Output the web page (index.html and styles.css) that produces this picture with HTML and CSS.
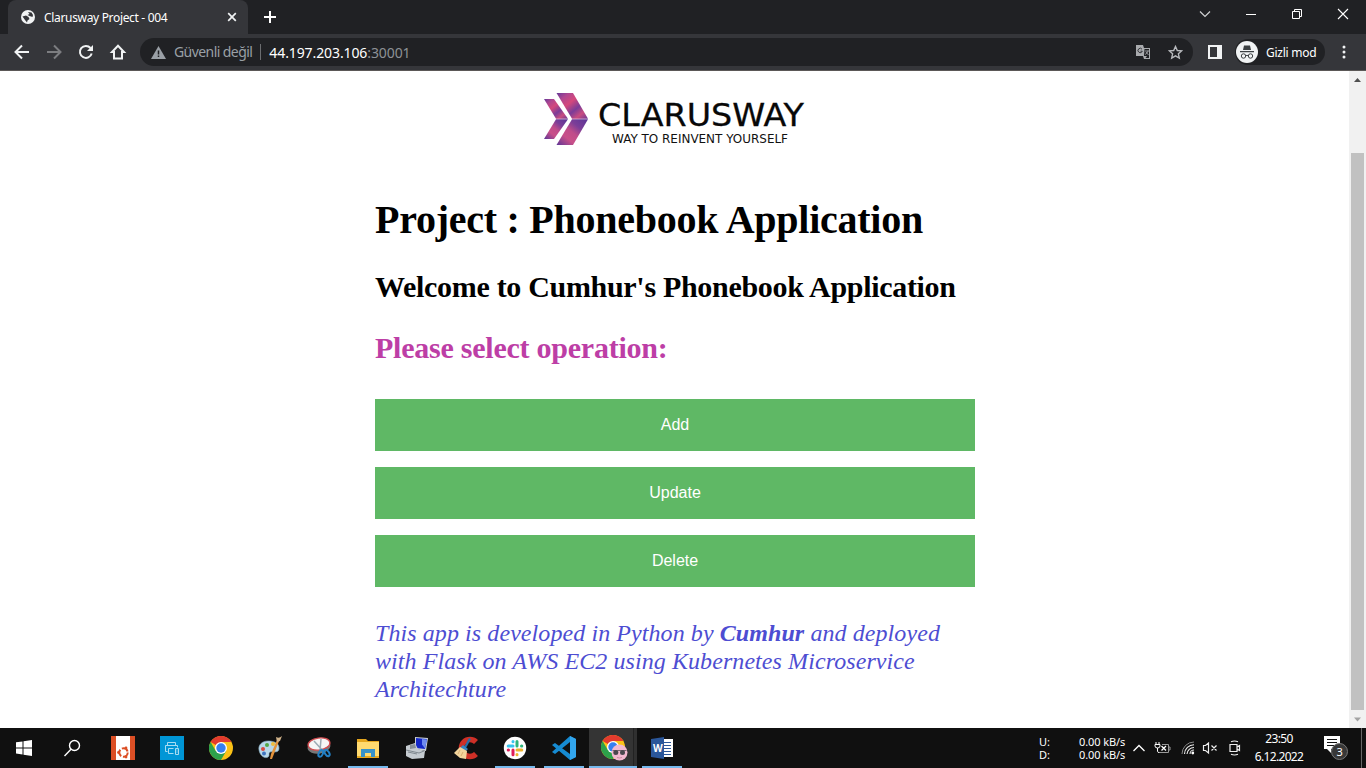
FILE: index.html
```html
<!DOCTYPE html>
<html lang="tr">
<head>
<meta charset="utf-8">
<title>Clarusway Project - 004</title>
<link rel="stylesheet" href="styles.css">
</head>
<body>
<header class="tabstrip">
  <div class="tab">
    <svg class="favicon" width="14" height="14" viewBox="0 0 14 14"><circle cx="7" cy="7" r="7" fill="#f1f3f4"/><path d="M1.500 6.500L5 5.500l2.500 1.500 1 2-2 1.500-.5 2L4 10z" fill="#35363a"/><path d="M7 2l1.500 2L6.500 5l2 1 3 1 .5-2-1.500-2.500z" fill="#35363a"/></svg>
    <span class="tab-title"><span class="fit">Clarusway Project - 004</span></span>
    <svg class="tab-close" width="10" height="10" viewBox="0 0 10 10"><path d="M1.200 1.200l7.600 7.600M8.800 1.200L1.200 8.800" stroke="#f1f3f4" stroke-width="1.700"/></svg>
  </div>
  <svg class="new-tab" width="12" height="12" viewBox="0 0 12 12"><path d="M6 0v12M0 6h12" stroke="#fff" stroke-width="2"/></svg>
  <div class="window-controls">
    <svg width="46" height="28" viewBox="0 0 46 28"><path d="M18 11.500l5 5 5-5" fill="none" stroke="#d0d1d3" stroke-width="1.200"/></svg>
    <svg width="46" height="28" viewBox="0 0 46 28"><path d="M18 14.500h10" stroke="#fff"/></svg>
    <svg width="46" height="28" viewBox="0 0 46 28"><path d="M18.500 11.500h7v7h-7zM20.500 11V9.500h7v7H26" fill="none" stroke="#fff"/></svg>
    <svg width="46" height="28" viewBox="0 0 46 28"><path d="M18 9l10 10M28 9L18 19" stroke="#fff" stroke-width="1.100"/></svg>
  </div>
</header>
<nav class="toolbar">
  <svg width="32" height="32" viewBox="0 0 32 32"><path d="M23 16H10M16 9.500L9.500 16l6.500 6.500" fill="none" stroke="#f1f3f4" stroke-width="2"/></svg>
  <svg width="32" height="32" viewBox="0 0 32 32"><path d="M9 16h13M16 9.500l6.500 6.500-6.500 6.500" fill="none" stroke="#7c7d80" stroke-width="2"/></svg>
  <svg width="32" height="32" viewBox="0 0 32 32"><path d="M20.500 12a6 6 0 1 0 1.200 5.500" fill="none" stroke="#f1f3f4" stroke-width="2"/><path d="M23 9v6h-6z" fill="#f1f3f4"/></svg>
  <svg width="32" height="32" viewBox="0 0 32 32"><path d="M16 9.800L22 16h-2v6.500h-8V16h-2z" fill="none" stroke="#f1f3f4" stroke-width="2"/></svg>
  <div class="omnibox">
    <svg class="warning" width="15" height="13" viewBox="0 0 15 13"><path d="M7.500 0L15 13H0z" fill="#9aa0a6"/><path d="M7.500 4.500v4M7.500 9.500v1.600" stroke="#202124" stroke-width="1.500"/></svg>
    <span class="insecure fit">Güvenli değil</span>
    <span class="address"><b class="host">44.197.203.106</b><span class="port">:30001</span></span>
    <svg class="translate" width="15" height="14" viewBox="0 0 15 14"><path d="M0 0h7l1 3h6v11H8l-1-3H0z" fill="#a9abae"/><path d="M8.500 4H13v9H9.500l1.500-2H8z" fill="#202124"/><path d="M6 4.200a2.200 2.200 0 1 0 .3 2H4.500" fill="none" stroke="#35363a"/><path d="M9 6h4M12 5.500c0 2-2 3.500-3 4M10 7l2.500 3" stroke="#a9abae" fill="none" stroke-width=".8"/></svg>
    <svg class="star" width="15" height="15" viewBox="0 0 15 15"><path d="M7.500 1.500l1.800 4 4.300.4-3.200 2.900.9 4.300-3.800-2.300-3.800 2.300.9-4.300-3.200-2.900 4.300-.4z" fill="none" stroke="#b8babd" stroke-width="1.400"/></svg>
  </div>
  <svg class="side-panel" width="14" height="14" viewBox="0 0 14 14"><path d="M0 0h14v14H0zM2 2v10h7V2z" fill="#f1f3f4" fill-rule="evenodd"/></svg>
  <div class="profile">
    <svg width="22" height="22" viewBox="0 0 22 22"><circle cx="11" cy="11" r="11" fill="#f1f3f4"/><path d="M8 4.500h6l1 4.500H7zM4 10h14v1.200H4z" fill="#3c4043"/><circle cx="7.500" cy="15" r="2.200" fill="none" stroke="#3c4043"/><circle cx="14.500" cy="15" r="2.200" fill="none" stroke="#3c4043"/><path d="M9.700 14.700q1.300-.8 2.600 0" fill="none" stroke="#3c4043"/></svg>
    <span class="fit">Gizli mod</span>
  </div>
  <svg class="menu-dots" width="4" height="14" viewBox="0 0 4 14"><g fill="#f1f3f4"><circle cx="2" cy="2" r="1.500"/><circle cx="2" cy="7" r="1.500"/><circle cx="2" cy="12" r="1.500"/></g></svg>
</nav>
<div class="viewport">
  <main class="page">
    <svg class="logo" width="270" height="54" viewBox="0 0 270 54">
      <defs>
        <linearGradient id="upper" x1="0" y1="0" x2="1" y2="1"><stop offset="0" stop-color="#643898"/><stop offset=".2" stop-color="#b04790"/><stop offset=".4" stop-color="#d4487c"/><stop offset=".62" stop-color="#7a3c98"/><stop offset=".8" stop-color="#c94c80"/><stop offset="1" stop-color="#6a3896"/></linearGradient>
        <linearGradient id="lower" x1="0" y1="1" x2="1" y2="0"><stop offset="0" stop-color="#5b3496"/><stop offset=".3" stop-color="#c95089"/><stop offset=".5" stop-color="#c04c8a"/><stop offset=".7" stop-color="#7b3e98"/><stop offset="1" stop-color="#5b3496"/></linearGradient>
      </defs>
      <path d="M0 6h10l14 19.700H12z" fill="url(#upper)"/><path d="M12 26.300h12L10 46H0z" fill="url(#lower)"/>
      <path d="M12.500 0H29l15 25.700H28z" fill="url(#upper)"/><path d="M28 26.300h16L29 52H12.500z" fill="url(#lower)"/>
      <text x="54" y="33" class="logo-name" textLength="206" lengthAdjust="spacingAndGlyphs">CLARUSWAY</text>
      <text x="68" y="50" class="logo-motto" textLength="176" lengthAdjust="spacingAndGlyphs">WAY TO REINVENT YOURSELF</text>
    </svg>
    <h1>Project : Phonebook Application</h1>
    <h2>Welcome to Cumhur's Phonebook Application</h2>
    <h2 class="prompt">Please select operation:</h2>
    <div class="actions"><a>Add</a><a>Update</a><a>Delete</a></div>
    <p class="credit">This app is developed in Python by <b>Cumhur</b> and deployed<br>with Flask on AWS EC2 using Kubernetes Microservice<br>Architechture</p>
  </main>
  <div class="scrollbar">
    <svg width="17" height="17" viewBox="0 0 17 17"><path d="M5 11l3.500-4 3.500 4z" fill="#505050"/></svg>
    <div class="thumb"></div>
    <svg width="17" height="17" viewBox="0 0 17 17"><path d="M5 6.500l3.500 4 3.500-4z" fill="#a3a3a3"/></svg>
  </div>
</div>
<footer class="taskbar">
  <div class="task sys"><svg width="16" height="16" viewBox="0 0 16 16"><path d="M0 2.300L6.500 1.400v6H0zM7.500 1.200L16 0v7.400H7.500zM0 8.400h6.500v6.100L0 13.600zM7.500 8.400H16V16l-8.500-1.200z" fill="#fff"/></svg></div>
  <div class="task sys search"><svg width="18" height="18" viewBox="0 0 18 18"><circle cx="11.500" cy="6.500" r="5" fill="none" stroke="#fff" stroke-width="1.400"/><path d="M8 10.200L1.500 17" stroke="#fff" stroke-width="1.400"/></svg></div>
  <div class="task"><svg width="24" height="24" viewBox="0 0 24 24"><path d="M0 0h24v24H0z" fill="#dc4f25"/><path d="M5 0h14v24H5z" fill="#fff"/><circle cx="12.500" cy="16.500" r="4.200" fill="none" stroke="#dc4f25" stroke-width="2" stroke-dasharray="7 1.800"/><g fill="#dc4f25"><circle cx="7.500" cy="16.500" r="1.400"/><circle cx="15" cy="12" r="1.400"/><circle cx="15" cy="21" r="1.400"/></g></svg></div>
  <div class="task"><svg width="24" height="24" viewBox="0 0 24 24"><path d="M0 0h24v24H0z" fill="#0096d6"/><g fill="none" stroke="#a8dcf2"><path d="M7.500 9.500v-3h8v3M7.500 15.500h-2v-6h12v2M8.500 12.500h5M8.500 12.500v5h5M15.500 12.500h3v6h-3zM16.500 14h1M16.500 16h1"/></g></svg></div>
  <div class="task"><svg width="24" height="24" viewBox="0 0 24 24"><use href="#chrome"/></svg></div>
  <div class="task"><svg width="24" height="24" viewBox="0 0 24 24"><path d="M10 5C4 5 0 9 1 14c1 6 6 9 9 7 2-1 0-4 2-5 3-1 9 2 9-4 0-5-5-7-11-7z" fill="#b9d8e9" stroke="#8ab0c5" stroke-width=".6"/><circle cx="5" cy="13" r="2" fill="#d9493f"/><circle cx="9" cy="9" r="2" fill="#54a846"/><circle cx="15" cy="8" r="2" fill="#efbd3d"/><circle cx="6" cy="17.500" r="2" fill="#3f74bf"/><path d="M21 5l-7 18h-2l1-5 6-14z" fill="#e3933c"/><path d="M18 1q3 2 6-1l-2 5-3 1z" fill="#d2b48b"/></svg></div>
  <div class="task"><svg width="24" height="24" viewBox="0 0 24 24"><ellipse cx="12" cy="11" rx="11.500" ry="6.500" fill="#777" transform="rotate(-8 12 11)"/><ellipse cx="12" cy="8" rx="11" ry="6" fill="#f6f5f5" stroke="#d24c50" stroke-width="1.300" transform="rotate(-8 12 8)"/><path d="M7 5l10 11M14 3l-1 12" stroke="#9caab3" stroke-width="1.500"/><g fill="none" stroke="#2380c5" stroke-width="2"><ellipse cx="14" cy="17.500" rx="2" ry="3.500" transform="rotate(25 14 17)"/><ellipse cx="20" cy="17" rx="2" ry="3.500" transform="rotate(-35 20 17)"/></g></svg></div>
  <div class="task open"><svg width="24" height="24" viewBox="0 0 24 24"><path d="M1 3h9l2 2h11v17H1z" fill="#e5a61e"/><path d="M1 6h22v14H1z" fill="#ffda70"/><path d="M5 21v-8h14v8h-4v-4H9v4z" fill="#3792c9"/></svg></div>
  <div class="task"><svg width="24" height="24" viewBox="0 0 24 24"><path d="M10 1l13 1-2 13-11-2z" fill="#cbd2d7"/><path d="M11 2l11 1-2 10-9-1z" fill="#1428c8"/><path d="M17 3l5 .5-2 9-3-4z" fill="#6f8bf0"/><path d="M1 10l9-3 3 6 7 2-1 7-12 1-6-3z" fill="#c5cbd0"/><path d="M1 14l13 3 5-2M3 16l9 2" stroke="#808990" fill="none"/><path d="M5 9l5-1 1 4-6 1z" fill="#858e95"/></svg></div>
  <div class="task"><svg width="24" height="24" viewBox="0 0 24 24"><path d="M22 6A8.500 8.500 0 1 0 22 18" fill="none" stroke="#cf3027" stroke-width="5.500"/><path d="M15 2l2 1-5 9-2-1z" fill="#2570aa"/><path d="M9 9l5 4-2 2-6-3z" fill="#3785c2"/><path d="M6 11l7 4-1 8-6-1-6-5z" fill="#f2d49c"/><path d="M6 14l-2 4M9 16l-2 4" stroke="#d8ae70"/></svg></div>
  <div class="task open"><svg width="24" height="24" viewBox="0 0 24 24"><circle cx="12" cy="12" r="11.200" fill="#fff"/><g fill="none" stroke-width="3" stroke-linecap="round"><path d="M10 5.500v.3M5.200 10h4.800" stroke="#36c5f0"/><path d="M14 5.500V10M18.500 10h.3" stroke="#2eb67d"/><path d="M14 14h4.800M14 18.500v.3" stroke="#ecb22e"/><path d="M10 14v4.800M5.200 14h.3" stroke="#e01e5a"/></g></svg></div>
  <div class="task open"><svg width="24" height="24" viewBox="0 0 24 24"><path d="M18 0l6 3v18l-6 3L0 9l3-2 15 11V6L3 18l-3-2z" fill="#168bd2"/><path d="M18 0l6 3v18l-6 3z" fill="#32a6ee"/></svg></div>
  <div class="task open active"><svg width="27" height="26" viewBox="0 0 27 26"><use href="#chrome"/><circle cx="18.500" cy="17.500" r="8" fill="#f2b8d0"/><path d="M11.500 15.500h14" stroke="#7b6773"/><circle cx="14.800" cy="17.500" r="2.500" fill="#49474e"/><circle cx="21.500" cy="17.500" r="2.500" fill="#49474e"/><path d="M16 22.500q3 1 5 0" fill="none" stroke="#c98ba0"/></svg></div>
  <div class="task open"><svg width="24" height="24" viewBox="0 0 24 24"><path d="M12 3h11v18H12z" fill="#fff"/><path d="M14 6.500h7M14 9.500h7M14 12.500h7M14 15.500h7M14 18.500h7" stroke="#2b579a"/><path d="M1 3l13-2v22L1 21z" fill="#2b579a"/><text x="3" y="16" class="word-letter">W</text></svg></div>
  <div class="tray">
    <div class="speed"><span>U:</span><span>0.00 kB/s</span><span>D:</span><span>0.00 kB/s</span></div>
    <svg class="chevron" width="14" height="10" viewBox="0 0 14 10"><path d="M1.500 8L7 2.500 12.500 8" fill="none" stroke="#fff" stroke-width="1.300"/></svg>
    <svg class="battery" width="17" height="16" viewBox="0 0 17 16"><path d="M8 4.500h6.500v8h-9M14.500 7h1.500v3h-1.500" fill="none" stroke="#999"/><path d="M1 4.500h5v1.500q0 2-2.500 2T1 6zM2 2v2.500M5 2v2.500M3.500 8v3.500q0 1 2 1" fill="none" stroke="#fff"/><path d="M7.500 6l4.500 4.500M12 6l-4.500 4.500" stroke="#fff" stroke-width="1.300"/></svg>
    <svg class="wifi" width="14" height="14" viewBox="0 0 14 14"><g fill="none"><path d="M1 13A12 12 0 0 1 13 1" stroke="#888"/><path d="M3.500 13A9.500 9.500 0 0 1 13 3.800M6 13a7 7 0 0 1 7-6.500M9 13a4 4 0 0 1 4-4" stroke="#eee" stroke-width="1.100"/></g><circle cx="11.800" cy="12" r="1.400" fill="#fff"/></svg>
    <svg class="sound" width="16" height="14" viewBox="0 0 16 14"><path d="M1.500 4.500h2L6.500 2v10L3.500 9.500h-2zM9.500 4.500l5 5M14.500 4.500l-5 5" fill="none" stroke="#eee" stroke-width="1.200"/></svg>
    <svg class="camera" width="12" height="16" viewBox="0 0 12 16"><path d="M1 4.500h7v7H1zM8 7l2.500-1.500v5L8 9M2 1.700q3.500-1.400 7 0M2 14.300q3.500 1.400 7 0" fill="none" stroke="#eee" stroke-width="1.200"/></svg>
    <div class="clock"><span class="fit">23:50</span><span class="fit">6.12.2022</span></div>
    <svg class="notice" width="28" height="26" viewBox="0 0 28 26"><path d="M1 1h16v13H8v4l-4-4H1z" fill="#fff"/><path d="M4 4.500h10M4 7.500h10M4 10.500h7" stroke="#111"/><circle cx="16.500" cy="16.500" r="8" fill="#383838" stroke="#777"/><text x="13.500" y="20.500" class="count">3</text></svg>
  </div>
  <svg class="defs" width="0" height="0"><defs><g id="chrome"><circle cx="12" cy="12" r="12" fill="#fbc116"/><path d="M12 12L1.600 6A12 12 0 0 1 22.400 6H12z" fill="#e33b2e"/><path d="M1.600 6A12 12 0 0 0 12 24l5.200-9L12 12 6.800 15z" fill="#2da14b"/><circle cx="12" cy="12" r="6" fill="#fff"/><circle cx="12" cy="12" r="4.700" fill="#367ff0"/></g></defs></svg>
</footer>
</body>
</html>
```
FILE: styles.css
```css
* { box-sizing: border-box; }
body { margin: 0; width: 1366px; height: 768px; overflow: hidden; display: flex; flex-direction: column; background: #fff; font-family: "Noto Sans", "Open Sans", sans-serif; }
svg { display: block; flex: none; }
.fit { white-space: nowrap; }
.tabstrip { height: 34px; flex: none; display: flex; background: #202124; }
.tab { width: 240px; height: 34px; margin-left: 8px; padding: 0 11px 0 13px; display: flex; align-items: center; background: #35363a; border-radius: 8px 8px 0 0; }
.tab-title { flex: 1; margin-left: 9px; font-size: 12px; letter-spacing: -.33px; color: #fff; }
.new-tab { margin: 11px 0 0 16px; }
.window-controls { display: flex; margin-left: auto; }
.toolbar { height: 37px; flex: none; display: flex; align-items: center; padding: 0 20px 0 6px; background: #35363a; border-bottom: 1px solid #5b5857; }
.omnibox { width: 1053px; height: 28px; margin-left: 6px; padding: 0 10px 0 11px; display: flex; align-items: center; border-radius: 14px; background: #202124; font-size: 14px; }
.insecure { margin-left: 8px; padding-right: 8px; border-right: 1px solid #6b6d70; color: #9aa0a6; line-height: 16px; letter-spacing: -.57px; }
.address { margin-left: 8px; color: #9aa0a6; letter-spacing: -.1px; }
.host { font-weight: 400; color: #fff; }
.port { color: #8d9196; }
.translate { margin-left: auto; }
.star { margin-left: 17px; }
.side-panel { margin-left: 15px; }
.profile { width: 90px; height: 26px; margin-left: 13px; padding-left: 1px; display: flex; align-items: center; gap: 8px; border-radius: 13px; background: #202124; color: #fff; font-size: 12px; letter-spacing: -.25px; }
.menu-dots { margin-left: auto; }
.viewport { height: 657px; flex: none; display: flex; justify-content: space-between; }
.page { width: 600px; margin-left: 375px; padding-top: 22px; font-family: "Liberation Serif", "Times New Roman", serif; }
.logo { margin-left: 169px; }
.logo-name { font: 32px "DejaVu Sans", sans-serif; fill: #080808; stroke: #080808; stroke-width: .3px; }
.logo-motto { font: 11.500px "DejaVu Sans", sans-serif; fill: #111; }
h1 { margin: 50px 0 0; font-size: 40px; line-height: 46px; white-space: nowrap; letter-spacing: -.26px; }
h2 { margin: 27px 0 0; font-size: 30px; line-height: 34px; white-space: nowrap; letter-spacing: -.31px; }
.prompt { margin-top: 27px; color: #bd3ea6; letter-spacing: -.24px; }
.actions { margin-top: 34px; display: flex; flex-direction: column; gap: 16px; }
.actions a { height: 52px; background: #5fb865; color: #fff; font: 16px/51px "Liberation Sans", Arial, sans-serif; text-align: center; }
.credit { margin: 32px 0 0; font-size: 24px; line-height: 28px; font-style: italic; color: #4d4dd2; white-space: nowrap; letter-spacing: .08px; }
.scrollbar { width: 17px; display: flex; flex-direction: column; align-items: center; background: #f1f1f1; }
.thumb { width: 13px; height: 557px; margin: 65px 0 1px; background: #c1c1c1; }
.taskbar { height: 40px; flex: none; display: flex; background: #101010; color: #fff; font-family: "Noto Sans", sans-serif; font-size: 12px; }
.task { width: 49px; height: 40px; display: flex; align-items: center; justify-content: center; }
.sys { padding-right: 1px; }
.search { padding-right: 3px; }
.open { background: linear-gradient(#76b9ed, #76b9ed) 5px 38px / 40px 2px no-repeat; }
.active { padding-left: 3px; background: linear-gradient(#76b9ed, #76b9ed) 1px 38px / 48px 2px no-repeat, linear-gradient(90deg, #101010 1px, #343434 1px, #343434 45px, #222 45px, #222 46px, #303030 46px); }
.word-letter { font: bold 10px "Noto Sans", sans-serif; fill: #fff; }
.tray { width: 324px; margin-left: auto; margin-right: 4px; display: flex; align-items: center; border-right: 1px solid #666; }
.speed { width: 87px; padding-left: 1px; display: grid; grid-template-columns: 40px 46px; line-height: 13px; letter-spacing: -.1px; font-size: 11px; white-space: nowrap; }
.chevron { margin-left: 7px; }
.battery { margin-left: 8px; }
.wifi { margin-left: 10px; }
.sound { margin-left: 7px; }
.camera { margin-left: 11px; }
.clock { width: 50px; margin-left: 13px; display: flex; flex-direction: column; align-items: center; line-height: 18px; letter-spacing: -.65px; }
.notice { margin-left: 19px; }
.count { font: 11px "Noto Sans", sans-serif; fill: #fff; }
.defs { width: 0; height: 0; }
```
